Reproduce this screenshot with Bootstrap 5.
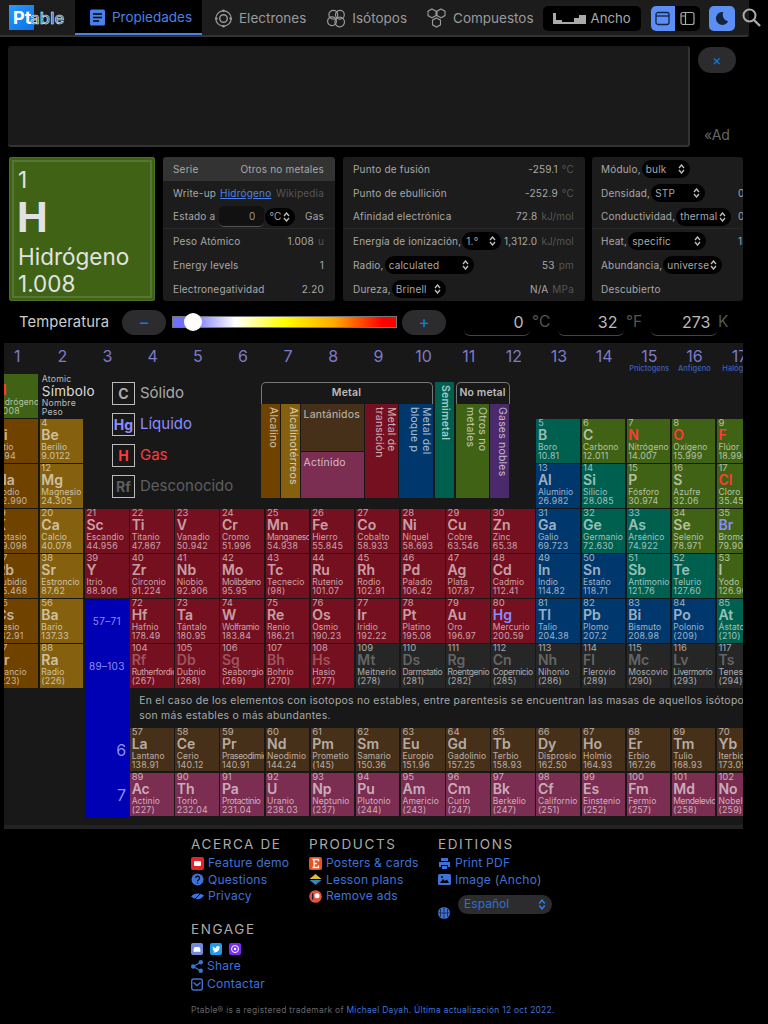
<!DOCTYPE html>
<html lang="es"><head><meta charset="utf-8"><title>Ptable</title>
<link href="https://cdn.jsdelivr.net/npm/bootstrap@5.3.0/dist/css/bootstrap.min.css" rel="stylesheet">
<style>
html,body{background:#000;margin:0;width:768px;height:1024px;overflow:hidden}
body{font-family:Inter,"Liberation Sans",sans-serif;color:#ccc}
a{text-decoration:none}
.topbar{width:749px;height:37px;background:#1c1c1c;border-bottom:2px solid #333;border-radius:0 0 3px 0;flex:none}
.brand{width:75px;height:35px;padding:5px 0 0 9px;flex:none}
.logo-p{display:block;width:25px;height:25px;background:linear-gradient(135deg,#2a9bff,#0b6fe4);color:#fff;font-weight:700;font-size:18px;line-height:26px;padding-left:4px;white-space:nowrap}
.logo-a{font-size:16.500px;font-weight:500;color:#2a6a94;-webkit-text-stroke:.6px #eef3f7;letter-spacing:.2px;margin-left:-1px}
.tabi{display:flex;align-items:center;gap:6px;color:#9a9a9a;font-size:13.500px;height:35px;flex:none;padding-top:1px}
.tabi svg{flex:none}
.tab-on{width:127px;background:#000;color:#4a80ea;border-bottom:2px solid #4a80ea;padding-left:14px;height:35px}
.tab-e{margin-left:12px}.tab-i{margin-left:21px}.tab-c{margin-left:19px}
.anch{margin-left:9px;margin-top:6px;width:98px;height:25px;background:#000;border-radius:5px;display:flex;align-items:center;gap:5px;padding-left:10px;color:#aaa;font-size:13.200px;flex:none}
.seg{margin-left:10px;margin-top:6px;display:flex;height:25px;width:49px;background:#000;border-radius:5px;flex:none}
.seg-a{width:24px;background:#5b8ff5;border-radius:5px 0 0 5px;display:flex;align-items:center;justify-content:center}
.seg-b{width:25px;display:flex;align-items:center;justify-content:center}
.moon{margin-left:9px;margin-top:6px;width:26px;height:25px;background:#5b8ff5;border-radius:5px;display:flex;align-items:center;justify-content:center;flex:none}
.srch{margin-left:-7px;flex:none}
.adzone{margin:9px 0 0 8px;height:101px;width:735px}
.adbox{width:682px;height:101px;background:#1a1a1a;border-right:2px solid #333;border-bottom:2px solid #333;border-radius:3px}
.adclose{margin:1px 0 0 8px;width:38px;height:26px;background:#2c2c2e;border-radius:13px;color:#0a7ee8;font-size:14px;line-height:26px;text-align:center}
.adlbl{color:#666;font-size:14px;margin:0 0 0 14px;padding-top:53px;line-height:18px}
.infoz{margin:10px 0 0 9px;height:144px;width:734px;overflow:hidden;gap:8px}
.elbox{width:146px;height:144px;flex:none;background:#3f6214;border:1px solid #4c7022;padding:2px;border-radius:2px}
.elin{height:100%;border:2px solid #557636;padding:5px 0 0 4px;color:#e2e2e2;font-size:22.500px;line-height:26px}
.elin b{display:block;font-size:41px;line-height:47px;font-weight:700;margin:1px 0 0 -1px}
.elin p{margin:2px 0 0;line-height:27px}
.itab{background:#1c1c1c;border-radius:3px;flex:none;overflow:hidden;font-size:10px;letter-spacing:.2px;color:#a8a8a8}
.t1{width:172px}.t2{width:242px}.t3{width:151px;margin-left:-1px}
.irow{height:24px;display:flex;align-items:center;justify-content:space-between;padding:0 11px 0 10px;white-space:nowrap}
.t3 .irow{padding-left:9px}
.irow-hi{background:#333;border-radius:3px 3px 0 0}
.irow-ln{border-bottom:1px solid #292929}
.un{color:#555;margin-left:4px}.muted2{color:#555}
.lbk{color:#4a80ea;text-decoration:underline}
.picker{appearance:none;-webkit-appearance:none;background-color:#000;color:#a8a8a8;border:0;border-radius:9px;height:18px;font:inherit;letter-spacing:.2px;padding:0 4px;margin-left:1px;background-repeat:no-repeat;background-position:right 5px center;background-size:7px 10px;background-image:url("data:image/svg+xml,%3Csvg xmlns='http://www.w3.org/2000/svg' viewBox='0 0 7 10'%3E%3Cpath d='M1 4l2.5-3L6 4M1 6l2.5 3L6 6' fill='none' stroke='%23bbb' stroke-width='1.4'/%3E%3C/svg%3E")}
.w30{width:30px}.w39{width:39px}.w48{width:48px}.w54{width:54px}.w55{width:55px}.w59{width:59px}.w78{width:78px}.w89{width:89px}
.tinp{width:45px;height:21px;background:#111;border:0;border-bottom:1px solid #555;border-radius:5px;color:#999;font:inherit;text-align:right;padding:0 9px 0 0}
.t3wrap{width:137px;display:flex;align-items:center;flex:none}
.tempz{margin:3px 0 0 19px;height:36px;width:724px}
.tlabel{width:103px;font-size:14.800px;color:#ccc;letter-spacing:.1px}
.pm{width:44px;height:25px;background:#2c2c2e;border-radius:13px;color:#0a7ee8;font-size:17px;line-height:24px;text-align:center;flex:none}
.grad{width:225px;margin:0 5px 0 6px;height:18px;padding:0;background:transparent;flex:none}
.grad::-webkit-slider-runnable-track{height:12px;border:1px solid #777;border-radius:0;background:linear-gradient(90deg,#6f6fff 0,#6f6fff 8%,#fff 28%,#ff0 50%,#fa0 72%,#f00 94%,#f00 100%)}
.grad::-webkit-slider-thumb{-webkit-appearance:none;appearance:none;width:18px;height:18px;border-radius:50%;background:#fff;border:0;margin-top:-4px}
.deg{width:66px;height:27px;background:#000;border:0;border-bottom:1px solid #444;border-radius:6px;color:#bbb;font:inherit;font-size:16px;text-align:right;padding:0 6.500px 0 0;flex:none}
.dgu{font-size:15.500px;color:#555;flex:none}
.d1{margin-left:18px}.dgu1{width:28px;padding-left:2px}.dgu2{width:27px;padding-left:2px}.dgu3{padding-left:1px}
.pt{margin:3px 0 0 4px;width:739px;height:486px;background:#181818;border-bottom:4px solid #222;overflow:hidden}
.pgrid{display:grid;margin-left:-9.300px;width:768px;grid-template-columns:repeat(17,45.150px);grid-template-rows:31px repeat(7,45px) 38.700px 45px 45px}
.gh{grid-row:1;text-align:center;color:#7c7cc8;font-size:16px;line-height:20px;padding-top:3px;white-space:nowrap}
.gh small{display:block;font-size:7.500px;line-height:8px;color:#3f5fb5;margin-top:-1px;font-weight:500}
.cell{margin:0 1.500px 1.500px 0;padding-left:1.500px;overflow:hidden;white-space:nowrap;color:rgba(255,255,255,.62)}
.cell i,.cell b,.cell u,.cell s{display:block;font-style:normal;text-decoration:none}
.cell i{font-size:9.500px;line-height:8px;padding-top:0}
.cell b{font-size:14px;line-height:16px;font-weight:600}
.cell u{font-size:8.500px;line-height:8px;letter-spacing:.1px}
.cell s{font-size:8.800px;line-height:10px;letter-spacing:.26px}
.tight u{letter-spacing:-.4px}
.k-a{background:#6f4200}.k-e{background:#85610f}.k-t{background:#751020}.k-p{background:#00386e}.k-m{background:#006050}.k-n{background:#3f6214}.k-l{background:#47301a}.k-c{background:#7c2d52}.k-u{background:#262626}.k-g{background:#4b2a6c}
.s-g b{color:#ff3a3a}.s-l b{color:#8c8cff}.s-u b{color:rgba(255,255,255,.3)}
.keyc{grid-column:2;grid-row:2;padding-left:2px;color:#bbb;font-size:8.700px;line-height:9px;letter-spacing:.2px;white-space:nowrap;padding-top:1px}
.keyc b{display:block;font-size:13.500px;line-height:15px;font-weight:400;color:#ddd}
.stat{grid-column:3/7;grid-row:2/6;padding:8px 0 0 27px}
.stl{display:flex;align-items:center;height:23px;margin-bottom:8px;font-size:15px;white-space:nowrap}
.stl span{width:23px;height:23px;border:1px solid #bbb;display:block;text-align:center;font-weight:700;font-size:14px;line-height:21px;margin-right:5px;flex:none}
.clr-l{color:#8c8cff}.clr-g{color:#ff3a3a}.clr-u{color:#5e5e5e}.clr-s{color:#aaa}
.legz{grid-column:7/14;grid-row:2/6;margin-left:-5px;padding-top:8px;display:flex;gap:2px;height:125px;font-size:10.500px;color:rgba(255,255,255,.68);letter-spacing:.2px}
.lg1{width:172px;flex:none}.lg3{width:54px;flex:none}
.brk{height:22px;border:1px solid #777;border-bottom:0;border-radius:5px 5px 0 0;text-align:center;font-weight:600;font-size:10.500px;line-height:20px;color:#bbb}
.brk2{letter-spacing:.1px;white-space:nowrap;padding:0}
.lgrow{display:flex;gap:1px;height:94px;margin-top:0}
.vt{writing-mode:vertical-rl;padding:3px 1px 0 2px;line-height:12px;flex:none;white-space:normal}
.v19{width:19px}.v33{width:33.500px}
.lgcol{width:63px;flex:none;display:flex;flex-direction:column;gap:1px}
.lgcol div{flex:1;padding:3px 3px;white-space:nowrap}
.semi{width:19px;flex:none;height:116px;writing-mode:vertical-rl;padding:3px 2px 0;font-weight:600;line-height:13px}
.blue{grid-column:3;grid-row:7/12;background:#0000b4;margin-right:1.500px;margin-bottom:0}
.blt{grid-column:3;text-align:center;color:#8f8ff0;font-size:10px;letter-spacing:.3px;display:flex;align-items:center;justify-content:center;z-index:1;margin-right:1.500px}
.blp{grid-column:3;text-align:right;color:#8f8ff0;font-size:16px;display:flex;align-items:center;justify-content:flex-end;padding-right:4px;z-index:1}
.note{grid-column:4/18;grid-row:9;padding:4px 0 0 9px;font-size:10.400px;line-height:15px;letter-spacing:.3px;color:#aaa;white-space:nowrap}
.foot{margin:7px 0 0 191px;width:380px;flex-wrap:wrap}
.fc{font-size:12.100px;line-height:16.600px;letter-spacing:.2px;color:#4a7fdc}
.fc h6{font-size:13.500px;font-weight:400;letter-spacing:1.600px;color:#aaa;margin:0 0 3px;line-height:16px}
.fc a{color:#3f72d8;display:flex;align-items:center;gap:4px;white-space:nowrap}
.fc svg{flex:none}
.c1{width:118px}.c2{width:129px}.c3{width:133px}.c4{width:380px;margin-top:2px}
.soc{display:flex;gap:7px;height:15px;align-items:center;margin:4px 0 2px}
.langr{display:flex;gap:8px;margin-top:-1px;padding-top:8px}
.lang{width:94px;height:19px;border-radius:10px;background-color:#2c2c2e;color:#2f6fd0;border:0;font:inherit;padding:0 6px;appearance:none;-webkit-appearance:none;background-repeat:no-repeat;background-position:right 6px center;background-size:8px 11px;background-image:url("data:image/svg+xml,%3Csvg xmlns='http://www.w3.org/2000/svg' viewBox='0 0 7 10'%3E%3Cpath d='M1 4l2.5-3L6 4M1 6l2.5 3L6 6' fill='none' stroke='%232f7fe8' stroke-width='1.4'/%3E%3C/svg%3E")}
.ctc{margin-top:1px}
.legal{margin:12px 0 0 191px;font-size:8.400px;letter-spacing:.3px;color:#666;white-space:nowrap}
.legal a{color:#3f72d8}
</style></head>
<body>
<div class="d-flex align-items-start">
<nav class="topbar d-flex align-items-start">
 <div class="brand"><span class="logo-p">Pt<span class="logo-a">able</span></span></div>
 <a class="tabi tab-on" href="#"><svg width="17" height="17" viewBox="0 0 17 17"><rect x="1" y="0.5" width="15" height="16" rx="1.5" fill="#4a80ea"/><path d="M4 5h9M4 8.500h9M4 12h6" stroke="#000" stroke-width="1.3"/></svg>Propiedades</a>
 <a class="tabi tab-e" href="#"><svg width="19" height="19" viewBox="0 0 19 19" fill="none" stroke="#9a9a9a"><circle cx="9.500" cy="9.500" r="3.800" stroke-width="1.4"/><circle cx="9.500" cy="9.500" r="7.700" stroke-width="1.2"/><g fill="#9a9a9a" stroke="none"><circle cx="9.500" cy="1.800" r="1.300"/><circle cx="9.500" cy="17.200" r="1.300"/><circle cx="2.300" cy="9.500" r="1.300"/><circle cx="16.700" cy="9.500" r="1.300"/></g></svg>Electrones</a>
 <a class="tabi tab-i" href="#"><svg width="19" height="19" viewBox="0 0 19 19" fill="none" stroke="#9a9a9a" stroke-width="1.2"><circle cx="6.300" cy="5.800" r="4.400"/><circle cx="12.900" cy="5.800" r="4.400"/><circle cx="5" cy="12.300" r="4.400"/><circle cx="12.700" cy="13" r="4.800"/></svg>Isótopos</a>
 <a class="tabi tab-c" href="#"><svg width="21" height="20" viewBox="0 0 21 20" fill="none" stroke="#9a9a9a" stroke-width="1.1"><path d="M6 1l4 2.200v4.400L6 9.800 2 7.600V3.200zM15 1l4 2.200v4.400L15 9.800l-4-2.200V3.200zM10.500 10l4 2.200v4.600l-4 2.200-4-2.200v-4.600z"/></svg>Compuestos</a>
 <div class="anch"><svg width="33" height="11" viewBox="0 0 33 11" fill="#aaa"><path d="M0 0h3v7h6v2h12V5h5V2h7v9H0z"/></svg>Ancho</div>
 <div class="seg"><div class="seg-a"><svg width="15" height="15" viewBox="0 0 15 15" fill="none" stroke="#14243f" stroke-width="1.3"><rect x="1" y="1.500" width="13" height="12" rx="2"/><path d="M1 5h13"/></svg></div><div class="seg-b"><svg width="15" height="15" viewBox="0 0 15 15" fill="none" stroke="#aaa" stroke-width="1.2"><rect x="1" y="1.500" width="13" height="12" rx="2"/><path d="M1 5h4M5.500 1.500v12"/></svg></div></div>
 <div class="moon"><svg width="15" height="15" viewBox="0 0 15 15"><path d="M9.300 1A6.500 6.500 0 1 0 14.200 10.500 7 7 0 0 1 9.300 1z" fill="#14243f"/></svg></div>
</nav>
<svg class="srch mt-2" width="19" height="19" viewBox="0 0 19 19" fill="none" stroke="#aaa" stroke-width="2"><circle cx="7.500" cy="7.500" r="6"/><path d="M12 12l6 6" stroke-width="2.400"/></svg>
</div>

<div class="adzone d-flex"><div class="adbox"></div><div><div class="adclose">×</div><div class="adlbl">«Ad</div></div></div>

<div class="infoz d-flex">
 <div class="elbox"><div class="elin">1<b>H</b><p>Hidrógeno<br>1.008</p></div></div>
 <div class="itab t1">
  <div class="irow irow-hi"><span>Serie</span><span>Otros no metales</span></div>
  <div class="irow"><span>Write-up</span><span class="ms-1 me-auto"><a class="lbk" href="#">Hidrógeno</a></span><span class="muted2">Wikipedia</span></div>
  <div class="irow irow-ln"><span>Estado a</span><input class="tinp ms-1" value="0" aria-label="t"><select class="picker w30" aria-label="u"><option>°C</option></select><span class="ms-auto">Gas</span></div>
  <div class="irow"><span>Peso Atómico</span><span>1.008<span class="un">u</span></span></div>
  <div class="irow"><span>Energy levels</span><span>1</span></div>
  <div class="irow"><span>Electronegatividad</span><span>2.20</span></div>
 </div>
 <div class="itab t2">
  <div class="irow"><span>Punto de fusión</span><span>-259.1<span class="un">°C</span></span></div>
  <div class="irow"><span>Punto de ebullición</span><span>-252.9<span class="un">°C</span></span></div>
  <div class="irow irow-ln"><span>Afinidad electrónica</span><span>72.8<span class="un">kJ/mol</span></span></div>
  <div class="irow"><span>Energía de ionización,<select class="picker w39" aria-label="n"><option>1.°</option></select></span><span>1,312.0<span class="un">kJ/mol</span></span></div>
  <div class="irow"><span>Radio,<select class="picker w89" aria-label="r"><option>calculated</option></select></span><span>53<span class="un">pm</span></span></div>
  <div class="irow"><span>Dureza,<select class="picker w54" aria-label="d"><option>Brinell</option></select></span><span>N/A<span class="un">MPa</span></span></div>
 </div>
 <div class="itab t3">
  <div class="irow"><span>Módulo,<select class="picker w48" aria-label="m"><option>bulk</option></select></span></div>
  <div class="irow"><span class="t3wrap">Densidad,<select class="picker w54" aria-label="s"><option>STP</option></select></span><span>0.0000899</span></div>
  <div class="irow irow-ln"><span class="t3wrap">Conductividad,<select class="picker w55" aria-label="c"><option>thermal</option></select></span><span>0.1805</span></div>
  <div class="irow"><span class="t3wrap">Heat,<select class="picker w78" aria-label="h"><option>specific</option></select></span><span>14.304</span></div>
  <div class="irow"><span>Abundancia,<select class="picker w59" aria-label="a"><option>universe</option></select></span></div>
  <div class="irow"><span>Descubierto</span></div>
 </div>
</div>

<div class="tempz d-flex align-items-center">
 <div class="tlabel">Temperatura</div>
 <div class="pm">−</div>
 <input type="range" class="form-range grad" min="0" max="1000" value="53" aria-label="Temperatura">
 <div class="pm">+</div>
 <input class="deg d1" value="0" aria-label="C"><span class="dgu dgu1">°C</span>
 <input class="deg" value="32" aria-label="F"><span class="dgu dgu2">°F</span>
 <input class="deg" value="273" aria-label="K"><span class="dgu dgu3">K</span>
</div>

<section class="pt"><div class="pgrid" id="pg">
 <div class="keyc">Atomic<b>Símbolo</b>Nombre<br>Peso</div>
 <div class="stat">
  <div class="stl clr-s"><span>C</span>Sólido</div>
  <div class="stl clr-l"><span>Hg</span>Líquido</div>
  <div class="stl clr-g"><span>H</span>Gas</div>
  <div class="stl clr-u"><span>Rf</span>Desconocido</div>
 </div>
 <div class="legz">
  <div class="lg1"><div class="brk">Metal</div>
   <div class="lgrow">
    <div class="vt v19 k-a">Alcalino</div><div class="vt v19 k-e">Alcalinotérreos</div>
    <div class="lgcol"><div class="k-l">Lantánidos</div><div class="k-c">Actínido</div></div>
    <div class="vt v33 k-t">Metal de<br>transición</div><div class="vt v33 k-p">Metal del<br>bloque p</div>
   </div></div>
  <div class="semi k-m">Semimetal</div>
  <div class="lg3"><div class="brk brk2">No metal</div>
   <div class="lgrow"><div class="vt v33 k-n">Otros no<br>metales</div><div class="vt v19 k-g">Gases nobles</div></div></div>
 </div>
 <div class="blue"></div>
 <div class="blt" id="b57">57–71</div>
 <div class="blt" id="b89">89–103</div>
 <div class="blp" id="p6">6</div>
 <div class="blp" id="p7">7</div>
 <div class="note">En el caso de los elementos con isotopos no estables, entre parentesis se encuentran las masas de aquellos isótopos que<br>son más estables o más abundantes.</div>
</div></section>

<footer class="foot d-flex">
 <div class="fc c1"><h6>ACERCA DE</h6>
  <a href="#"><svg width="13" height="13" viewBox="0 0 13 13"><rect width="13" height="13" rx="2" fill="#e8222c"/><rect x="3" y="4" width="7" height="5" rx="1" fill="#fff"/></svg>Feature demo</a>
  <a href="#"><svg width="13" height="13" viewBox="0 0 13 13"><circle cx="6.500" cy="6.500" r="6" fill="#3f72d8"/><path d="M4.700 5a1.900 1.900 0 1 1 2.800 1.700c-.7.400-1 .7-1 1.500M6.500 9.500v1" stroke="#000" stroke-width="1.300" fill="none"/></svg>Questions</a>
  <a href="#"><svg width="13" height="13" viewBox="0 0 13 13"><path d="M0 6.500C3 3 8 2.500 13 5.500 10 10 5 10.500 0 6.500z" fill="#3f72d8"/><path d="M2 11L11 2" stroke="#000" stroke-width="1"/></svg>Privacy</a>
 </div>
 <div class="fc c2"><h6>PRODUCTS</h6>
  <a href="#"><svg width="13" height="13" viewBox="0 0 13 13"><rect width="13" height="13" rx="2" fill="#e8501e"/><path d="M3.500 2.500h6v2M3.500 10.500h6v-2M5 2.500v8M5 6.500h3" stroke="#fff" stroke-width="1.300" fill="none"/></svg>Posters &amp; cards</a>
  <a href="#"><svg width="13" height="13" viewBox="0 0 13 13"><path d="M6.500 1L12.500 6h-12z" fill="#e5b93c"/><path d="M.5 7h12l-6 5z" fill="#2e88c8"/></svg>Lesson plans</a>
  <a href="#"><svg width="13" height="13" viewBox="0 0 13 13"><circle cx="6.500" cy="6.500" r="6.300" fill="#e5533d"/><rect x="3" y="3.500" width="1.300" height="6" fill="#14243f"/><circle cx="8" cy="5.800" r="2.500" fill="#fff"/></svg>Remove ads</a>
 </div>
 <div class="fc c3"><h6>EDITIONS</h6>
  <a href="#"><svg width="13" height="13" viewBox="0 0 13 13" fill="#3f72d8"><path d="M3 1h7v3H3zM1 5h11v5h-2V8H3v2H1zM4 9h5v3H4z"/></svg>Print PDF</a>
  <a href="#"><svg width="13" height="13" viewBox="0 0 13 13"><rect y="1" width="13" height="11" rx="1.500" fill="#3f72d8"/><path d="M2 10l3-4 2 2 2-1.500L11 10z" fill="#000"/><circle cx="4" cy="4" r="1" fill="#000"/></svg><span>Image <span class="text-secondary">(</span>Ancho<span class="text-secondary">)</span></span></a>
  <div class="langr"><svg class="mt-2" width="12" height="16" viewBox="0 0 12 16"><circle cx="6" cy="10" r="6" fill="#3f72d8"/><path d="M0 10h12M6 4v12M2.500 6v8M9.500 6v8" stroke="#14243f" stroke-width=".8"/></svg><select class="lang" aria-label="Idioma"><option>Español</option></select></div>
 </div>
 <div class="fc c4"><h6>ENGAGE</h6>
  <div class="soc"><svg width="12" height="12" viewBox="0 0 12 12"><rect width="12" height="12" rx="2" fill="#7289da"/><path d="M2.500 8.500c0-2.500.6-4 1.500-4.500h4c.9.500 1.500 2 1.500 4.500-1 .5-1.500.5-2 .2H4.500c-.5.300-1 .3-2-.2z" fill="#fff"/></svg><svg width="12" height="12" viewBox="0 0 12 12"><rect width="12" height="12" rx="2" fill="#1d9bf0"/><path d="M2.500 9c4 1.500 7-1 7-4.500l.8-1-1.200.300C8.500 2.500 6 3 6 5 4.500 5 3.500 4.300 2.800 3.300 2.300 4.500 2.800 5.500 3.400 6L2.800 5.900c0 1 .7 1.500 1.400 1.700H3.500c.2.600.9 1 1.500 1-.8.400-1.600.5-2.500.4z" fill="#fff"/></svg><svg width="12" height="12" viewBox="0 0 12 12"><rect width="12" height="12" rx="2" fill="#7a2cf0"/><circle cx="6" cy="6" r="3.500" fill="none" stroke="#fff"/><circle cx="6" cy="6" r="1.300" fill="#fff"/></svg></div>
  <a href="#"><svg width="12" height="13" viewBox="0 0 12 13" fill="#3f72d8"><circle cx="9.800" cy="2.200" r="2.200"/><circle cx="2.200" cy="6.500" r="2.200"/><circle cx="9.800" cy="10.800" r="2.200"/><path d="M9.800 2.200L2.200 6.500l7.600 4.300" fill="none" stroke="#3f72d8" stroke-width="1.200"/></svg>Share</a>
  <a class="ctc" href="#"><svg width="12" height="13" viewBox="0 0 12 13" fill="none" stroke="#3f72d8" stroke-width="1.400"><rect x=".7" y="1" width="10.600" height="11" rx="2"/><path d="M2.500 4.500L6 7.500l3.500-3"/></svg>Contactar</a>
 </div>
</footer>
<div class="legal">Ptable® is a registered trademark of <a href="#">Michael Dayah</a><a href="#">. Última actualización 12 oct 2022.</a></div>

<script>
var D=[
"1 H Hidrógeno 1.008 n 1 1 g","3 Li Litio 6.94 a 1 2","4 Be Berilio 9.0122 e 2 2","5 B Boro 10.81 m 13 2","6 C Carbono 12.011 n 14 2","7 N Nitrógeno 14.007 n 15 2 g","8 O Oxígeno 15.999 n 16 2 g","9 F Flúor 18.998 n 17 2 g",
"11 Na Sodio 22.990 a 1 3","12 Mg Magnesio 24.305 e 2 3","13 Al Aluminio 26.982 p 13 3","14 Si Silicio 28.085 m 14 3","15 P Fósforo 30.974 n 15 3","16 S Azufre 32.06 n 16 3","17 Cl Cloro 35.45 n 17 3 g",
"19 K Potasio 39.098 a 1 4","20 Ca Calcio 40.078 e 2 4","21 Sc Escandio 44.956 t 3 4","22 Ti Titanio 47.867 t 4 4","23 V Vanadio 50.942 t 5 4","24 Cr Cromo 51.996 t 6 4","25 Mn Manganeso 54.938 t 7 4 x","26 Fe Hierro 55.845 t 8 4","27 Co Cobalto 58.933 t 9 4","28 Ni Níquel 58.693 t 10 4","29 Cu Cobre 63.546 t 11 4","30 Zn Zinc 65.38 t 12 4","31 Ga Galio 69.723 p 13 4","32 Ge Germanio 72.630 m 14 4","33 As Arsénico 74.922 m 15 4","34 Se Selenio 78.971 n 16 4","35 Br Bromo 79.904 n 17 4 l",
"37 Rb Rubidio 85.468 a 1 5","38 Sr Estroncio 87.62 e 2 5","39 Y Itrio 88.906 t 3 5","40 Zr Circonio 91.224 t 4 5","41 Nb Niobio 92.906 t 5 5","42 Mo Molibdeno 95.95 t 6 5 x","43 Tc Tecnecio (98) t 7 5","44 Ru Rutenio 101.07 t 8 5","45 Rh Rodio 102.91 t 9 5","46 Pd Paladio 106.42 t 10 5","47 Ag Plata 107.87 t 11 5","48 Cd Cadmio 112.41 t 12 5","49 In Indio 114.82 p 13 5","50 Sn Estaño 118.71 p 14 5","51 Sb Antimonio 121.76 m 15 5","52 Te Telurio 127.60 m 16 5","53 I Yodo 126.90 n 17 5",
"55 Cs Cesio 132.91 a 1 6","56 Ba Bario 137.33 e 2 6","72 Hf Hafnio 178.49 t 4 6","73 Ta Tántalo 180.95 t 5 6","74 W Wolframio 183.84 t 6 6 x","75 Re Renio 186.21 t 7 6","76 Os Osmio 190.23 t 8 6","77 Ir Iridio 192.22 t 9 6","78 Pt Platino 195.08 t 10 6","79 Au Oro 196.97 t 11 6","80 Hg Mercurio 200.59 t 12 6 l","81 Tl Talio 204.38 p 13 6","82 Pb Plomo 207.2 p 14 6","83 Bi Bismuto 208.98 p 15 6","84 Po Polonio (209) p 16 6","85 At Ástato (210) m 17 6",
"87 Fr Francio (223) a 1 7","88 Ra Radio (226) e 2 7","104 Rf Rutherfordio (267) t 4 7 ux","105 Db Dubnio (268) t 5 7 u","106 Sg Seaborgio (269) t 6 7 u","107 Bh Bohrio (270) t 7 7 u","108 Hs Hasio (277) t 8 7 u","109 Mt Meitnerio (278) u 9 7 u","110 Ds Darmstatio (281) u 10 7 ux","111 Rg Roentgenio (282) u 11 7 ux","112 Cn Copernicio (285) u 12 7 x","113 Nh Nihonio (286) u 13 7 u","114 Fl Flerovio (289) u 14 7 u","115 Mc Moscovio (290) u 15 7 u","116 Lv Livermorio (293) u 16 7 ux","117 Ts Teneso (294) u 17 7 u",
"57 La Lantano 138.91 l 4 9","58 Ce Cerio 140.12 l 5 9","59 Pr Praseodimio 140.91 l 6 9 x","60 Nd Neodimio 144.24 l 7 9","61 Pm Prometio (145) l 8 9","62 Sm Samario 150.36 l 9 9","63 Eu Europio 151.96 l 10 9","64 Gd Gadolinio 157.25 l 11 9","65 Tb Terbio 158.93 l 12 9","66 Dy Disprosio 162.50 l 13 9","67 Ho Holmio 164.93 l 14 9","68 Er Erbio 167.26 l 15 9","69 Tm Tulio 168.93 l 16 9","70 Yb Iterbio 173.05 l 17 9",
"89 Ac Actinio (227) c 4 10","90 Th Torio 232.04 c 5 10","91 Pa Protactinio 231.04 c 6 10 x","92 U Uranio 238.03 c 7 10","93 Np Neptunio (237) c 8 10","94 Pu Plutonio (244) c 9 10","95 Am Americio (243) c 10 10","96 Cm Curio (247) c 11 10","97 Bk Berkelio (247) c 12 10","98 Cf Californio (251) c 13 10","99 Es Einstenio (252) c 14 10","100 Fm Fermio (257) c 15 10","101 Md Mendelevio (258) c 16 10 x","102 No Nobelio (259) c 17 10"];
var g=document.getElementById('pg'),sub={15:'Pnictogens',16:'Anfígeno',17:'Halógeno'},h='';
for(var i=1;i<=17;i++){h+='<div class="gh" data-c="'+i+'">'+i+(sub[i]?'<small>'+sub[i]+'</small>':'')+'</div>'}
D.forEach(function(s){var p=s.split(' '),f=p[7]||'',c=['cell','k-'+p[4]];
 if(f.indexOf('g')>=0)c.push('s-g');if(f.indexOf('l')>=0)c.push('s-l');if(f.indexOf('u')>=0||p[4]=='u')c.push('s-u');if(f.indexOf('x')>=0)c.push('tight');
 h+='<div class="'+c.join(' ')+'" data-c="'+p[5]+'" data-r="'+(+p[6]+1)+'"><i>'+p[0]+'</i><b>'+p[1]+'</b><u>'+p[2]+'</u><s>'+p[3]+'</s></div>'});
g.insertAdjacentHTML('beforeend',h);
g.querySelectorAll('[data-c]').forEach(function(e){e.style.gridColumn=e.dataset.c;if(e.dataset.r)e.style.gridRow=e.dataset.r});
[['b57',7],['b89',8],['p6',10],['p7',11]].forEach(function(a){document.getElementById(a[0]).style.gridRow=a[1]});
</script>
<script src="https://cdn.jsdelivr.net/npm/bootstrap@5.3.0/dist/js/bootstrap.bundle.min.js"></script>
</body></html>
